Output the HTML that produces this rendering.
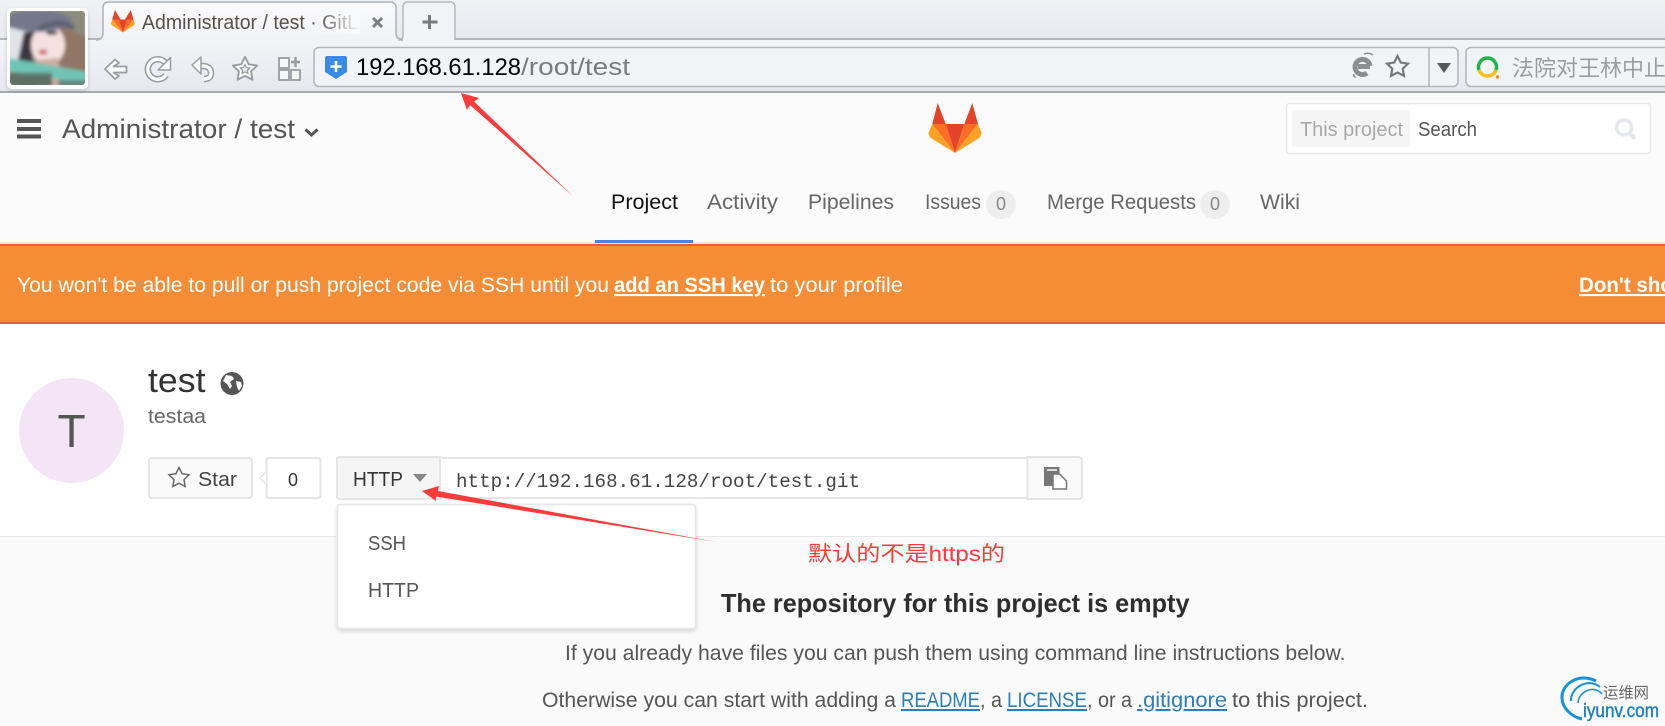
<!DOCTYPE html>
<html lang="en"><head><meta charset="utf-8"><title>Administrator / test</title>
<style>
html,body{margin:0;padding:0;width:1665px;height:726px;overflow:hidden;background:#fff}
svg{display:block;position:absolute;left:0;top:0}
text{font-family:"Liberation Sans","Noto Sans CJK SC",sans-serif;white-space:pre}
.mono{font-family:"Liberation Mono",monospace}
.n{font-size:21px;fill:#666}
</style></head><body>
<svg width="1665" height="726" viewBox="0 0 1665 726" xmlns="http://www.w3.org/2000/svg">
<defs>
<linearGradient id="bar" x1="0" y1="0" x2="0" y2="1"><stop offset="0" stop-color="#f1f2f6"/><stop offset="1" stop-color="#e7e9ef"/></linearGradient>
<linearGradient id="tool" x1="0" y1="0" x2="0" y2="1"><stop offset="0" stop-color="#f3f4f8"/><stop offset="1" stop-color="#e6e8ee"/></linearGradient>
<linearGradient id="tab" x1="0" y1="0" x2="0" y2="1"><stop offset="0" stop-color="#fbfbfc"/><stop offset="1" stop-color="#f1f2f6"/></linearGradient>
<linearGradient id="fade" x1="0" y1="0" x2="1" y2="0"><stop offset="0" stop-color="#fafbfc" stop-opacity="0"/><stop offset="1" stop-color="#f8f9fa"/></linearGradient>
<filter id="b2" x="-10%" y="-10%" width="120%" height="120%"><feGaussianBlur stdDeviation="1.800"/></filter>
<filter id="sh" x="-10%" y="-10%" width="120%" height="120%"><feDropShadow dx="0" dy="2" stdDeviation="2" flood-color="#000" flood-opacity=".16"/></filter>
<clipPath id="ph"><rect x="10" y="11" width="75" height="74" rx="3"/></clipPath>
</defs>

<!-- browser chrome -->
<rect width="1665" height="39" fill="url(#bar)"/>
<rect y="38" width="1665" height="2" fill="#b4b7bc"/>
<rect y="40" width="1665" height="52" fill="url(#tool)"/>
<rect y="91" width="1665" height="2" fill="#a6a9ae"/>

<path d="M455 40V7q0-5-5-5H408q-5 0-5 5V35q0 5-5 5" fill="#f2f3f6" stroke="#b5b8bd" stroke-width="1.5"/>
<path d="M96 40q6 0 7-6V8q0-6 6-6H390q6 0 6 6V34q1 6 7 6" fill="url(#tab)" stroke="#aeb1b6" stroke-width="1.5"/>
<rect x="104" y="38" width="292" height="3" fill="#f2f3f6"/>

<!-- tab fox -->
<g transform="translate(111,10) scale(.45)">
<polygon points="9,0 2.5,21 21,21" fill="#e24329"/><polygon points="44,0 31,21 50,21" fill="#e24329"/>
<polygon points="17,21 36,21 26.5,50" fill="#e24329"/><polygon points="3,21 17,21 26.5,50" fill="#fc6d26"/>
<polygon points="36,21 50,21 26.5,50" fill="#fc6d26"/><polygon points="3,21 0,30 2,34 26.5,50" fill="#fca326"/>
<polygon points="50,21 53,30 51,34 26.5,50" fill="#fca326"/>
</g>
<text x="142" y="29" font-size="20" fill="#56504a" textLength="216" lengthAdjust="spacingAndGlyphs">Administrator / test · GitL</text>
<rect x="318" y="8" width="42" height="26" fill="url(#fade)"/>
<path d="M373 18l9 9m0-9l-9 9" stroke="#7d7f83" stroke-width="3" fill="none"/>
<path d="M429.5 15v14M422.5 22h15" stroke="#777a7e" stroke-width="3" fill="none"/>

<!-- avatar photo -->
<rect x="7" y="8" width="81" height="81" rx="5" fill="#fff" filter="url(#sh)"/>
<g clip-path="url(#ph)"><g filter="url(#b2)">
<rect x="8" y="9" width="79" height="78" fill="#8b8c7d"/>
<rect x="8" y="28" width="20" height="34" fill="#e0e3e8"/>
<path d="M58 24L88 38V88H52z" fill="#917665"/>
<path d="M24 32L36 32 32 58 40 88H18V60z" fill="#3a3840"/>
<ellipse cx="48" cy="45" rx="17" ry="20" fill="#f5e2e0"/>
<path d="M36 60L58 58 64 88H38z" fill="#cdaca2"/>
<ellipse cx="38" cy="21" rx="33" ry="11" fill="#74778c"/>
<path d="M38 30Q56 18 74 28" stroke="#5d5f72" stroke-width="5" fill="none"/>
<ellipse cx="52" cy="33" rx="6" ry="2" fill="#4a4143"/>
<ellipse cx="43" cy="52" rx="4.500" ry="2.800" fill="#d56672"/>
<path d="M8 58L88 72V84L8 71z" fill="#6fc4b6"/>
<rect x="8" y="73" width="44" height="14" fill="#5d6f66"/>
<rect x="58" y="80" width="30" height="7" fill="#66867c"/>
</g></g>

<!-- toolbar icons -->
<path d="M105 69L115 59.500 119 63 113.500 66.500H126.500V72.500H113.500L119 76 115 79z" fill="#fbfbfb" stroke="#9a9c9f" stroke-width="1.800" stroke-linejoin="round"/>
<path d="M166 63.500A10 10 0 1 0 166 75" fill="none" stroke="#9a9c9f" stroke-width="6.500"/>
<path d="M166 63.500A10 10 0 1 0 166 75" fill="none" stroke="#fbfbfb" stroke-width="3.400"/>
<path d="M170.500 57.500V70H158z" fill="#fbfbfb" stroke="#9a9c9f" stroke-width="1.5" stroke-linejoin="round"/>
<path d="M199 66H204Q211 67 211 73T204 79" fill="none" stroke="#9a9c9f" stroke-width="6.500"/>
<path d="M199 66H204Q211 67 211 73T204 79" fill="none" stroke="#fbfbfb" stroke-width="3.400"/>
<path d="M192 65L201 57V74z" fill="#fbfbfb" stroke="#9a9c9f" stroke-width="1.500" stroke-linejoin="round"/>
<path transform="translate(245,69.500) scale(1.270)" d="M0-10L2.940-4.050 9.510-3.090 4.760 1.550 5.880 8.090 0 5-5.880 8.090-4.760 1.550-9.510-3.090-2.940-4.050Z" fill="#fbfbfb" stroke="#9a9c9f" stroke-width="1.500" stroke-linejoin="round"/>
<path transform="translate(245,69.500) scale(.5)" d="M0-10L2.940-4.050 9.510-3.090 4.760 1.550 5.880 8.090 0 5-5.880 8.090-4.760 1.550-9.510-3.090-2.940-4.050Z" fill="#e8e8ea" stroke="#9a9c9f" stroke-width="2.500"/>
<g fill="#f6f6f7" stroke="#9a9c9f" stroke-width="1.800"><rect x="279" y="58" width="10" height="10"/><rect x="279" y="70" width="10" height="10"/><rect x="291" y="70" width="9" height="10"/></g>
<path d="M295.500 57v10M291 62h9" stroke="#9a9c9f" stroke-width="2.500"/>

<!-- url bar -->
<rect x="314" y="47.500" width="1144" height="39" rx="5" fill="#f2f3f7" stroke="#b2b5ba" stroke-width="1.500"/>
<path d="M1429 47.500V86.500" stroke="#b2b5ba" stroke-width="1.500"/>
<path d="M325 58q0-2 2-2h18q2 0 2 2v14l-11 7-11-7z" fill="#3b8be6"/>
<path d="M336 61v11M330.500 66.500h11" stroke="#fff" stroke-width="2.600"/>
<text x="356" y="75" font-size="24" fill="#000" textLength="165" lengthAdjust="spacingAndGlyphs">192.168.61.128</text>
<text x="521" y="75" font-size="24" fill="#7a7c80" textLength="109" lengthAdjust="spacingAndGlyphs">/root/test</text>
<path d="M1370 66A7.500 7.500 0 1 0 1367 73M1358 66.500h12" fill="none" stroke="#8c8e91" stroke-width="5"/>
<path d="M1373 55q-4-3-9-1M1354 74q-1 3 2 3" fill="none" stroke="#8c8e91" stroke-width="1.500"/>
<path transform="translate(1397.500,67) scale(1.100)" d="M0-10L2.940-4.050 9.510-3.090 4.760 1.550 5.880 8.090 0 5-5.880 8.090-4.760 1.550-9.510-3.090-2.940-4.050Z" fill="none" stroke="#77797c" stroke-width="2"/>
<polygon points="1437,63 1451,63 1444,73" fill="#55575a"/>

<!-- baidu search box -->
<rect x="1466" y="47.500" width="220" height="39" rx="5" fill="#f2f3f7" stroke="#b2b5ba" stroke-width="1.500"/>
<path d="M1479 70A9 9 0 1 1 1496 70" fill="none" stroke="#22b24c" stroke-width="3.500"/>
<path d="M1479 70A9 9 0 0 0 1496 70" fill="none" stroke="#fbbf19" stroke-width="3.500"/>
<circle cx="1497.500" cy="77" r="1.700" fill="#f08a1d"/>
<text x="1512" y="76" font-size="22" fill="#9b9da0">法院对王林中止</text>

<!-- gitlab header -->
<rect y="93" width="1665" height="149" fill="#fbfbfb"/>
<rect y="242" width="1665" height="2" fill="#e5e5e5"/>
<path d="M17 119h24v4H17zM17 127h24v4H17zM17 134.500h24v4H17z" fill="#555"/>
<text x="62" y="138" font-size="27" fill="#555" textLength="233" lengthAdjust="spacingAndGlyphs">Administrator / test</text>
<path d="M305.500 129.500l6 5.500 6-5.500" fill="none" stroke="#555" stroke-width="3"/>

<g>
<polygon points="937.700,103 932.300,124 945.700,124" fill="#e24329"/>
<polygon points="972.300,103 964.300,124 978,124" fill="#e24329"/>
<polygon points="945.700,124 964.300,124 955,153" fill="#e24329"/>
<polygon points="932.300,124 945.700,124 955,153" fill="#fc6d26"/>
<polygon points="964.300,124 978,124 955,153" fill="#fc6d26"/>
<polygon points="932.300,124 928.300,133 930,137.500 955,153" fill="#fca326"/>
<polygon points="978,124 981.700,133 980,137.500 955,153" fill="#fca326"/>
</g>

<rect x="1286.500" y="103.500" width="364" height="50" rx="3" fill="#fff" stroke="#e8e8e8" stroke-width="1.600"/>
<rect x="1292" y="110" width="118" height="37" rx="2" fill="#f5f5f5"/>
<text x="1300" y="136" font-size="20" fill="#a8a8a8" textLength="103" lengthAdjust="spacingAndGlyphs">This project</text>
<text x="1418" y="136" font-size="20" fill="#555" textLength="59" lengthAdjust="spacingAndGlyphs">Search</text>
<circle cx="1624" cy="127.500" r="7.500" fill="none" stroke="#e6e7ec" stroke-width="3.500"/>
<path d="M1629.500 133l5.500 5.500" stroke="#e6e7ec" stroke-width="4"/>

<!-- nav -->
<text x="611" y="209" font-size="21" fill="#111" textLength="67" lengthAdjust="spacingAndGlyphs">Project</text>
<text x="707" y="209" class="n" textLength="71" lengthAdjust="spacingAndGlyphs">Activity</text>
<text x="808" y="209" class="n" textLength="86" lengthAdjust="spacingAndGlyphs">Pipelines</text>
<text x="925" y="209" class="n" textLength="56" lengthAdjust="spacingAndGlyphs">Issues</text>
<rect x="986" y="190" width="30" height="29" rx="14.500" fill="#eee"/>
<text x="1001" y="210" font-size="18" fill="#888" text-anchor="middle">0</text>
<text x="1047" y="209" class="n" textLength="149" lengthAdjust="spacingAndGlyphs">Merge Requests</text>
<rect x="1200" y="190" width="30" height="29" rx="14.500" fill="#eee"/>
<text x="1215" y="210" font-size="18" fill="#888" text-anchor="middle">0</text>
<text x="1260" y="209" class="n" textLength="40" lengthAdjust="spacingAndGlyphs">Wiki</text>
<rect x="595" y="240" width="98" height="3" fill="#4a86e0"/>

<!-- banner -->
<rect y="244" width="1665" height="80" fill="#f48d35"/>
<rect y="244" width="1665" height="2" fill="#e75e40"/>
<rect y="322" width="1665" height="2" fill="#e75e40"/>
<g font-size="21" fill="#fff">
<text x="17" y="292" textLength="592" lengthAdjust="spacingAndGlyphs">You won't be able to pull or push project code via SSH until you</text>
<text x="614" y="292" font-weight="bold" text-decoration="underline" textLength="151" lengthAdjust="spacingAndGlyphs">add an SSH key</text>
<text x="770" y="292" textLength="133" lengthAdjust="spacingAndGlyphs">to your profile</text>
<text x="1579" y="292" font-weight="bold" text-decoration="underline" textLength="110" lengthAdjust="spacingAndGlyphs">Don't show</text>
</g>

<!-- project header -->
<ellipse cx="71.500" cy="430.500" rx="52.500" ry="52.500" fill="#f3e5f5"/>
<text x="71.500" y="447" font-size="46" fill="#555" text-anchor="middle">T</text>
<text x="148" y="392" font-size="34" fill="#333" textLength="57.500" lengthAdjust="spacingAndGlyphs">test</text>
<circle cx="232" cy="383.500" r="11.500" fill="#555"/>
<path d="M226 375l6 1 2 3-4 3 2 4-2 3-3-5-4-3zM236 381l5 1 1 4-3 5-2-4z" fill="#fff"/>
<text x="148" y="423" font-size="20" fill="#666" textLength="58" lengthAdjust="spacingAndGlyphs">testaa</text>

<rect x="149" y="458" width="103" height="40" rx="3" fill="#fafafa" stroke="#e5e5e5" stroke-width="2"/>
<path transform="translate(179,478) scale(1.050)" d="M0-10L2.940-4.050 9.510-3.090 4.760 1.550 5.880 8.090 0 5-5.880 8.090-4.760 1.550-9.510-3.090-2.940-4.050Z" fill="none" stroke="#666" stroke-width="1.400"/>
<text x="198" y="486" font-size="20" fill="#444" textLength="39" lengthAdjust="spacingAndGlyphs">Star</text>
<rect x="266.500" y="458" width="54" height="40" rx="2" fill="#fff" stroke="#e5e5e5" stroke-width="2"/>
<path d="M266 472l-6 6 6 6" fill="#fff" stroke="#e5e5e5" stroke-width="1.500"/>
<rect x="267.500" y="471" width="3" height="14" fill="#fff"/>
<text x="293" y="486" font-size="18" fill="#333" text-anchor="middle">0</text>

<rect x="337" y="458" width="745" height="40" rx="3" fill="#fff" stroke="#e5e5e5" stroke-width="2"/>
<path d="M440 457H340q-3 0-3 3v36q0 3 3 3H440z" fill="#f5f5f5" stroke="#e5e5e5" stroke-width="2"/>
<text x="353" y="486" font-size="20" fill="#333" textLength="50" lengthAdjust="spacingAndGlyphs">HTTP</text>
<polygon points="413,474 427,474 420,482" fill="#888"/>
<text x="456" y="487" class="mono" font-size="19.200" fill="#444" textLength="404">http://192.168.61.128/root/test.git</text>
<path d="M1027.500 457H1078q4 0 4 4v34q0 4-4 4H1027.500z" fill="#fafafa" stroke="#e5e5e5" stroke-width="2"/>
<rect x="1044" y="467" width="15.500" height="19" fill="#777"/>
<rect x="1047" y="469" width="10" height="2" fill="#ddd"/>
<path d="M1053 474h6.500l7 7v8H1053z" fill="#fff" stroke="#777" stroke-width="1.500"/>

<!-- lower content -->
<rect y="536" width="1665" height="190" fill="#fafafa"/>
<rect y="536" width="1665" height="1" fill="#e8e8e8"/>
<text x="721" y="612" font-size="26" font-weight="bold" fill="#2e2e2e" textLength="468.500" lengthAdjust="spacingAndGlyphs">The repository for this project is empty</text>
<text x="565" y="660" font-size="21" fill="#555" textLength="780.500" lengthAdjust="spacingAndGlyphs">If you already have files you can push them using command line instructions below.</text>
<g font-size="21" fill="#555">
<text x="542" y="707" textLength="354" lengthAdjust="spacingAndGlyphs">Otherwise you can start with adding a</text>
<text x="901" y="707" fill="#2e7eb5" text-decoration="underline" textLength="79" lengthAdjust="spacingAndGlyphs">README</text>
<text x="980" y="707" textLength="22" lengthAdjust="spacingAndGlyphs">, a</text>
<text x="1007" y="707" fill="#2e7eb5" text-decoration="underline" textLength="80" lengthAdjust="spacingAndGlyphs">LICENSE</text>
<text x="1087" y="707" textLength="45" lengthAdjust="spacingAndGlyphs">, or a</text>
<text x="1137" y="707" fill="#2e7eb5" text-decoration="underline" textLength="90" lengthAdjust="spacingAndGlyphs">.gitignore</text>
<text x="1232" y="707" textLength="136" lengthAdjust="spacingAndGlyphs">to this project.</text>
</g>

<!-- dropdown -->
<rect x="337.500" y="504.500" width="358" height="124" rx="3" fill="#fff" stroke="#e6e6e6" stroke-width="1.500" filter="url(#sh)"/>
<text x="368" y="550" font-size="20" fill="#555" textLength="38" lengthAdjust="spacingAndGlyphs">SSH</text>
<text x="368" y="597" font-size="20" fill="#555" textLength="51" lengthAdjust="spacingAndGlyphs">HTTP</text>

<!-- annotations -->
<polygon points="461,93 479,98 474,101.500 574,197 470,105 467,110" fill="#fb3a3a"/>
<polygon points="422,491 439,486 438,491 716,542 436,496.500 436,501" fill="#fb3a3a"/>
<text x="808" y="561" font-size="21" fill="#fb3a3a" textLength="197" lengthAdjust="spacingAndGlyphs">默认的不是https的</text>

<!-- watermark -->
<g fill="none" stroke="#1592d8">
<path d="M1596 681C1578 672 1561 685 1562 698 1562 708 1572 717 1582 719" stroke-width="3"/>
<path d="M1600 687C1588 677 1570 688 1571 701" stroke-width="2"/>
<path d="M1602 694C1594 684 1578 692 1578 703" stroke-width="1.500"/>
</g>
<text x="1603" y="698" font-size="15.500" fill="#666" textLength="46" lengthAdjust="spacingAndGlyphs">运维网</text>
<text x="1583" y="717" font-size="19" fill="#1a7fc0" stroke="#1a7fc0" stroke-width=".4" textLength="76" lengthAdjust="spacingAndGlyphs">iyunv.com</text>
</svg>
</body></html>
